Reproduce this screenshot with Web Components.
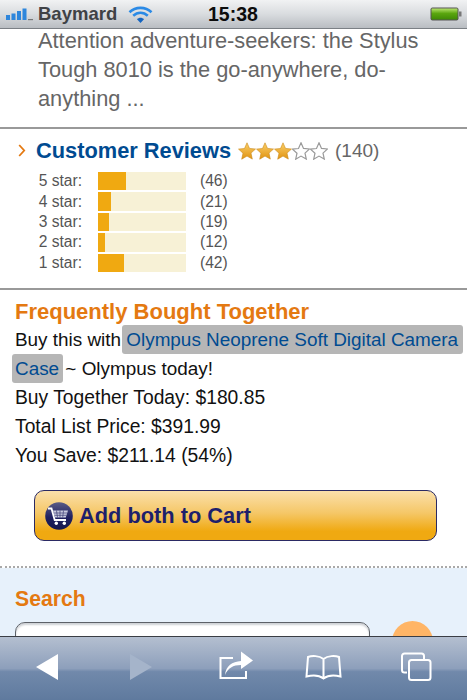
<!DOCTYPE html>
<html>
<head>
<meta charset="utf-8">
<title>Baymard</title>
<style>
html, body { margin: 0; height: 700px; overflow: hidden; background: #fff; }
body { font-family: "Liberation Sans", Arial, sans-serif; display: flex; flex-direction: column; }
.page { flex: 1; min-height: 0; overflow: hidden; display: block; }
</style>
</head>
<body>
<status-bar carrier="Baymard" time="15:38"></status-bar>
<div class="page">
  <product-blurb>Attention adventure-seekers: the Stylus Tough 8010 is the go-anywhere, do-anything ...</product-blurb>
  <review-summary count="(140)">
    <rating-row label="5 star:" pct="32" count="(46)"></rating-row>
    <rating-row label="4 star:" pct="15" count="(21)"></rating-row>
    <rating-row label="3 star:" pct="13.5" count="(19)"></rating-row>
    <rating-row label="2 star:" pct="8.5" count="(12)"></rating-row>
    <rating-row label="1 star:" pct="30" count="(42)"></rating-row>
  </review-summary>
  <bought-together></bought-together>
  <search-panel></search-panel>
</div>
<safari-toolbar></safari-toolbar>

<script>
class StatusBar extends HTMLElement {
  constructor() {
    super();
    this.attachShadow({ mode: 'open' }).innerHTML = `
<style>
:host { display: flex; flex: none; height: 29px; align-items: center; box-sizing: border-box; border-bottom: 1px solid #7b8085;
  background: linear-gradient(#f1f2f3, #d9dcdf 50%, #b9bdc2); position: relative; padding: 0 5px; }
.signal { margin-right: 4px; }
.carrier { font: bold 18.5px "Liberation Sans", sans-serif; color: #3f4246; width: 90px; }
.wifi { margin-right: 55px; }
.time { font: bold 19.5px "Liberation Sans", sans-serif; color: #0c0c0c; flex: 1; }
</style>
<svg class="signal" width="29" height="14" viewBox="0 0 29 14">
  <g fill="#2d86dc"><rect x="1" y="8" width="4" height="5"/><rect x="6.5" y="6.5" width="4" height="6.5"/><rect x="12" y="4" width="4" height="9"/><rect x="17.5" y="1.5" width="4" height="11.5"/></g>
  <rect x="23" y="12" width="5" height="1.2" fill="#777"/>
</svg>
<span class="carrier"></span>
<svg class="wifi" width="25" height="19" viewBox="0 0 25 19" fill="none">
  <path d="M1.5 7.2C7.5 1.4 17.5 1.4 23.5 7.2" stroke="#2a8ae6" stroke-width="2.6"/>
  <path d="M5.2 10.8C9.5 6.8 15.5 6.8 19.8 10.8" stroke="#2a8ae6" stroke-width="2.6"/>
  <path d="M9 14.2C11 12.2 14 12.2 16 14.2L12.5 18Z" fill="#1565c0"/>
</svg>
<span class="time"></span>
<svg width="32" height="14" viewBox="0 0 32 14">
  <rect x=".5" y=".5" width="28" height="13" rx="2" fill="#555"/>
  <rect x="1.5" y="1.5" width="26" height="11" fill="url(#bat)"/>
  <rect x="29" y="4.5" width="2.5" height="5" fill="#777"/>
  <defs><linearGradient id="bat" x1="0" y1="0" x2="0" y2="1"><stop offset="0" stop-color="#b6e36a"/><stop offset=".45" stop-color="#5aa60f"/><stop offset="1" stop-color="#3f8a06"/></linearGradient></defs>
</svg>`;
    this.shadowRoot.querySelector('.carrier').textContent = this.getAttribute('carrier');
    this.shadowRoot.querySelector('.time').textContent = this.getAttribute('time');
  }
}

class ProductBlurb extends HTMLElement {
  constructor() {
    super();
    this.attachShadow({ mode: 'open' }).innerHTML = `
<style>
:host { display: block; box-sizing: border-box; height: 103px; margin-top: -3px; padding: 0 30px 0 38px;
  font-size: 21.8px; line-height: 29px; color: #666; border-bottom: 2px solid #999; }
</style>
<slot></slot>`;
  }
}

const STAR = 'M9 .8l2.5 5.6 6 .6-4.5 4.1 1.3 6L9 14.1 3.7 17.2 5 11.2.5 7.1l6-.6z';

class ReviewSummary extends HTMLElement {
  constructor() {
    super();
    const on = `<svg width="18" height="18" viewBox="0 0 18 18"><path d="${STAR}" fill="url(#gold)" stroke="#c98a1a" stroke-width=".6"/></svg>`;
    const off = `<svg width="18" height="18" viewBox="0 0 18 18"><path d="${STAR}" fill="#fff" stroke="#9a9a9a" stroke-width="1.2"/></svg>`;
    this.attachShadow({ mode: 'open' }).innerHTML = `
<style>
:host { display: block; box-sizing: border-box; height: 161px; border-bottom: 2px solid #999; }
.head { display: flex; align-items: center; height: 43px; padding-left: 18px; }
.chev { margin-right: 10px; }
h2 { margin: 0; font: bold 21.8px "Liberation Sans", sans-serif; color: #004b91; }
.stars { display: flex; margin-left: 7px; width: 92px; }
.count { margin-left: 5px; font-size: 19px; color: #666; }
.rows { display: flex; flex-direction: column; }
</style>
<svg width="0" height="0" style="position:absolute"><defs><linearGradient id="gold" x1="0" y1="0" x2="0" y2="1"><stop offset="0" stop-color="#fbd06a"/><stop offset="1" stop-color="#e0920f"/></linearGradient></defs></svg>
<div class="head">
  <svg class="chev" width="8" height="13" viewBox="0 0 8 13" fill="none"><path d="M1.2 1l5 5.5-5 5.5" stroke="#e47911" stroke-width="1.8"/></svg>
  <h2>Customer Reviews</h2>
  <span class="stars">${on}${on}${on}${off}${off}</span>
  <span class="count"></span>
</div>
<div class="rows"><slot></slot></div>`;
    this.shadowRoot.querySelector('.count').textContent = this.getAttribute('count');
  }
}

class RatingRow extends HTMLElement {
  constructor() {
    super();
    this.attachShadow({ mode: 'open' }).innerHTML = `
<style>
:host { display: flex; align-items: center; height: 18.4px; font-size: 15.6px; color: #555; margin-bottom: 2px; }
.label { width: 82px; text-align: right; }
.bar { width: 88px; height: 18.4px; margin-left: 15.5px; background: #f7f1d6; }
.fill { height: 100%; background: #f0a911; }
.count { margin-left: 14.5px; }
</style>
<span class="label"></span>
<div class="bar"><div class="fill"></div></div>
<span class="count"></span>`;
    this.shadowRoot.querySelector('.label').textContent = this.getAttribute('label');
    this.shadowRoot.querySelector('.count').textContent = this.getAttribute('count');
    this.shadowRoot.querySelector('.fill').style.width = this.getAttribute('pct') + '%';
  }
}

class BoughtTogether extends HTMLElement {
  constructor() {
    super();
    this.attachShadow({ mode: 'open' }).innerHTML = `
<style>
:host { display: block; box-sizing: border-box; height: 278px; padding: 9px 0 0 15px; border-bottom: 2px dotted #a9a9a9; }
h3 { margin: 0; font: bold 22px/26px "Liberation Sans", sans-serif; color: #e47911; }
p { margin: 0; font-size: 19.3px; line-height: 29px; color: #111; }
p.buy { font-size: 18.9px; }
a { color: #004b91; text-decoration: none; background: #b6b6b6; border-radius: 3px; padding: 4px 5px 4px 4px; margin-left: -4px; }
a.rest { padding: 4px 4px 4px 3px; margin: 0 -3px 0 -3px; }
cart-button { margin-top: 20px; }
</style>
<h3>Frequently Bought Together</h3>
<p class="buy">Buy this with <a>Olympus Neoprene Soft Digital Camera</a> <a class="rest">Case</a> ~ Olympus today!</p>
<p>Buy Together Today: $180.85</p>
<p>Total List Price: $391.99</p>
<p>You Save: $211.14 (54%)</p>
<cart-button>Add both to Cart</cart-button>`;
  }
}

class CartButton extends HTMLElement {
  constructor() {
    super();
    this.attachShadow({ mode: 'open' }).innerHTML = `
<style>
:host { display: flex; align-items: center; gap: 6px; box-sizing: border-box; width: 403px; height: 51px; margin-left: 19px; padding: 0 10px;
  border: 1.5px solid #2b2a63; border-radius: 10px; background: linear-gradient(#fbe0ab, #f5c767 45%, #f0a911 82%, #f0a911);
  font: bold 21.8px "Liberation Sans", sans-serif; color: #1e1f6b; }
</style>
<svg width="28" height="28" viewBox="0 0 28 28">
  <defs><linearGradient id="orb" x1="0" y1="0" x2="0" y2="1"><stop offset="0" stop-color="#5a5c86"/><stop offset=".55" stop-color="#1f2060"/><stop offset="1" stop-color="#16174c"/></linearGradient></defs>
  <circle cx="14" cy="14" r="13.8" fill="url(#orb)"/>
  <path d="M3 6.5h3.5l3.2 11.5h11.3" fill="none" stroke="#fff" stroke-width="1.8"/>
  <path d="M8 8.5h15l-2.2 7H10z" fill="#c9cbe0"/>
  <path d="M11.5 8.5l1 7M15 8.5v7M18.5 8.5l-.8 7M9 11h13M9.8 13.3h11.8" stroke="#3c3d74" stroke-width=".7"/>
  <circle cx="11.3" cy="21.3" r="1.7" fill="#fff"/><circle cx="19.3" cy="21.3" r="1.7" fill="#fff"/>
</svg>
<slot></slot>`;
  }
}

class SearchPanel extends HTMLElement {
  constructor() {
    super();
    this.attachShadow({ mode: 'open' }).innerHTML = `
<style>
:host { display: block; box-sizing: border-box; height: 100px; padding: 18px 0 0 15px; background: #e7f1fb; }
h3 { margin: 0; font: bold 21.2px/26px "Liberation Sans", sans-serif; color: #e47911; }
.row { display: flex; gap: 22px; margin-top: 10px; }
.field { width: 355px; height: 40px; box-sizing: border-box; border: 1.5px solid #5d6168; border-radius: 10px; background: #fff;
  box-shadow: inset 0 2px 2px #cfd2d6; }
.go { width: 41px; height: 41px; border-radius: 50%; background: #ffb566; margin-top: -1px; }
</style>
<h3>Search</h3>
<div class="row"><div class="field"></div><div class="go"></div></div>`;
  }
}

class SafariToolbar extends HTMLElement {
  constructor() {
    super();
    this.attachShadow({ mode: 'open' }).innerHTML = `
<style>
:host { display: flex; flex: none; height: 64px; box-sizing: border-box; align-items: center;
  padding: 0 0 3px 35px; border-top: 1.5px solid #3a3d44; background: linear-gradient(#b4bfd0, #8d9fbb 50%, #7189ab 55%, #5f7a9e); }
</style>
<svg width="24" height="28" viewBox="0 0 24 28"><path d="M23 1v26L1 14z" fill="#fff"/></svg>
<svg width="24" height="28" viewBox="0 0 24 28" style="margin-left:70px"><path d="M1 1v26l22-13z" fill="#a5b4ca"/></svg>
<svg width="36" height="30" viewBox="0 0 36 30" fill="none" style="margin-left:66px;margin-bottom:2px">
  <path d="M14 7H1.5V27H27V20" stroke="#fff" stroke-width="2"/>
  <path d="M6 24C7 15 13 10.5 22 10V.5L34 9.5 22 18V14C14 14 9 17 6 24Z" fill="#fff"/>
</svg>
<svg width="37" height="26" viewBox="0 0 37 26" fill="none" stroke="#fff" stroke-width="2" style="margin-left:50px">
  <path d="M18.5 5C14 1.5 7 1.5 3 3L1.5 22.5C7 21 14 21 18.5 24.5 23 21 30 21 35.5 22.5L34 3C30 1.5 23 1.5 18.5 5ZM18.5 5V24"/>
</svg>
<svg width="32" height="30" viewBox="0 0 32 30" fill="none" stroke="#fff" stroke-width="2" style="margin-left:58px">
  <path d="M24 7V4a2.5 2.5 0 0 0-2.5-2.5h-17A2.5 2.5 0 0 0 2 4v14a2.5 2.5 0 0 0 2.5 2.5H7"/>
  <rect x="9" y="8" width="21.5" height="20" rx="2.5"/>
</svg>`;
  }
}

customElements.define('status-bar', StatusBar);
customElements.define('product-blurb', ProductBlurb);
customElements.define('review-summary', ReviewSummary);
customElements.define('rating-row', RatingRow);
customElements.define('bought-together', BoughtTogether);
customElements.define('cart-button', CartButton);
customElements.define('search-panel', SearchPanel);
customElements.define('safari-toolbar', SafariToolbar);
</script>
</body>
</html>
